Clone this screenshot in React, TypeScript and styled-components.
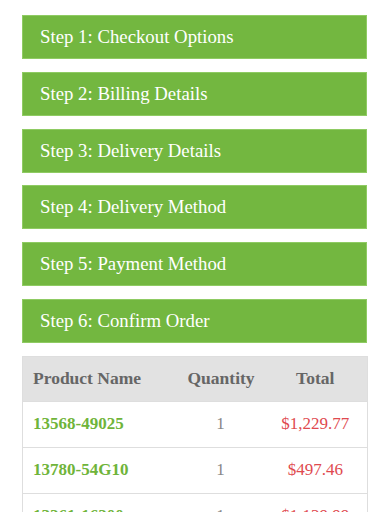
import React from "react";
import styled, { createGlobalStyle } from "styled-components";

const GlobalStyle = createGlobalStyle`
  html, body {
    margin: 0;
    padding: 0;
    background: #fff;
    font-family: "Liberation Serif", "Times New Roman", serif;
  }
`;

const Page = styled.div`
  padding: 15px 22px 0;
  display: flex;
  flex-direction: column;
  gap: 12.8px;
`;

const StepPanel = styled.div`
  height: 42px;
  background: #73b740;
  border: 1px solid #8fcb63;
  color: #fff;
  font-size: 18.8px;
  display: flex;
  align-items: center;
  padding: 0 17px;
  box-sizing: content-box;
`;

const Table = styled.table`
  width: 100%;
  table-layout: fixed;
  border-collapse: collapse;
  border: 1px solid #dedede;
  font-size: 17px;
`;

const HeadCell = styled.th<{ align?: string; w: number }>`
  width: ${({ w }) => w}px;
  background: #e2e2e2;
  color: #666;
  font-weight: bold;
  font-size: 17.5px;
  height: 45px;
  padding: 0 10px;
  box-sizing: border-box;
  text-align: ${({ align }) => align || "center"};
`;

const Row = styled.tr`
  border-top: 1px solid #dedede;
`;

const Cell = styled.td<{ tone: "name" | "qty" | "price" }>`
  height: 45px;
  padding: 0 10px;
  text-align: ${({ tone }) => (tone === "name" ? "left" : "center")};
  font-weight: ${({ tone }) => (tone === "name" ? "bold" : "normal")};
  color: ${({ tone }) =>
    tone === "name" ? "#6fb43a" : tone === "qty" ? "#888" : "#e04a4f"};
  white-space: nowrap;
`;

const steps = [
  "Step 1: Checkout Options",
  "Step 2: Billing Details",
  "Step 3: Delivery Details",
  "Step 4: Delivery Method",
  "Step 5: Payment Method",
  "Step 6: Confirm Order",
];

const products = [
  { name: "13568-49025", qty: 1, total: "$1,229.77" },
  { name: "13780-54G10", qty: 1, total: "$497.46" },
  { name: "13261-16200", qty: 1, total: "$1,139.99" },
];

const App = () => {
  return (
    <>
      <GlobalStyle />
      <Page>
        {steps.map((s) => (
          <StepPanel key={s}>{s}</StepPanel>
        ))}
        <Table>
          <thead>
            <tr>
              <HeadCell align="left" w={155}>
                Product Name
              </HeadCell>
              <HeadCell w={86}>Quantity</HeadCell>
              <HeadCell w={104}>Total</HeadCell>
            </tr>
          </thead>
          <tbody>
            {products.map((p) => (
              <Row key={p.name}>
                <Cell tone="name">{p.name}</Cell>
                <Cell tone="qty">{p.qty}</Cell>
                <Cell tone="price">{p.total}</Cell>
              </Row>
            ))}
          </tbody>
        </Table>
      </Page>
    </>
  );
};

export default App;
